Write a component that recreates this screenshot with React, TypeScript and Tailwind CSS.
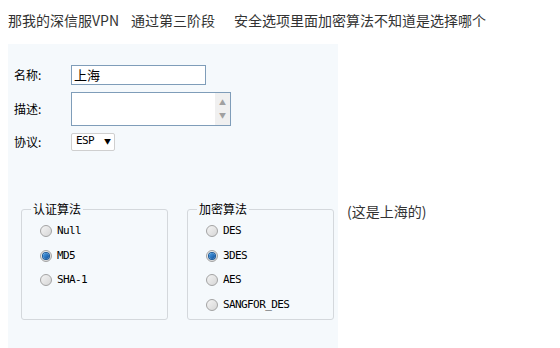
const cjk = "font-['Noto_Sans_CJK_SC','Noto_Sans',sans-serif]";
const mono = "font-['DejaVu_Sans_Mono','Liberation_Mono',monospace]";

function Radio({ label, checked }: { label: string; checked?: boolean }) {
  return (
    <div className="flex h-[24.5px] items-center">
      <span className="flex h-[12px] w-[12px] items-center justify-center rounded-full border border-[#a3a3a3] bg-gradient-to-br from-[#f4f4f4] to-[#d6d6d6]">
        {checked && (
          <span className="h-[6px] w-[6px] rounded-full bg-gradient-to-br from-[#4fa3e8] to-[#0b4f9c] ring-1 ring-[#1c5a99]" />
        )}
      </span>
      <span className={`${mono} ml-[5px] text-[11px] tracking-[-0.6px] text-black`}>{label}</span>
    </div>
  );
}

function Group({ title, items, checked }: { title: string; items: string[]; checked: string }) {
  return (
    <div className="relative h-[111px] w-[147px] rounded-[3px] border border-[#d4d8dc] pl-[18px] pt-[9px]">
      <span className={`${cjk} absolute -top-[9px] left-[9px] bg-[#f5f9fc] px-[2px] text-[12px] leading-4 text-black`}>
        {title}
      </span>
      {items.map((it) => (
        <Radio key={it} label={it} checked={it === checked} />
      ))}
    </div>
  );
}

export default function App() {
  return (
    <div className={`${cjk} h-[348px] w-[560px] overflow-hidden bg-white text-[#333]`}>
      {/* 标题 */}
      <div className="flex h-11 items-start pl-2 pt-[10px] text-[14px] leading-5">
        <span>那我的深信服VPN</span>
        <span className="ml-[12px]">通过第三阶段</span>
        <span className="ml-[19px]">安全选项里面加密算法不知道是选择哪个</span>
      </div>

      <div className="flex">
        <div className="ml-2 h-[304px] w-[330px] bg-[#f5f9fc] pl-[6px] pt-[21px] text-[12px] text-black">
          <div className="flex h-5 items-center">
            <span className="w-[57px]">名称:</span>
            <div className="flex h-5 w-[135px] items-center border border-[#7f9db9] bg-white pl-[2px] text-[13px]">上海</div>
          </div>

          <div className="mt-[7px] flex h-[34px] items-center">
            <span className="w-[57px]">描述:</span>
            <div className="flex h-[34px] w-[160px] border border-[#7f9db9] bg-white">
              <div className="flex-1" />
              <div className="flex w-[15px] flex-col items-center justify-between bg-[#f0f0f0] py-[6px] text-[7px] leading-none text-[#a0a0a0]">
                <span>▲</span>
                <span>▼</span>
              </div>
            </div>
          </div>

          <div className="mt-[7px] flex h-[17px] items-center">
            <span className="w-[57px]">协议:</span>
            <div className="flex h-[18px] w-[44px] items-center rounded-[2px] border border-[#cfcfcf] bg-white pl-[4px]">
              <span className={`${mono} text-[11px] tracking-[-0.6px]`}>ESP</span>
              <span className="ml-[10px] text-[7px] leading-none">▼</span>
            </div>
          </div>

          <div className="ml-[7px] mt-[59px] flex gap-[19px]">
            <Group title="认证算法" items={["Null", "MD5", "SHA-1"]} checked="MD5" />
            <Group title="加密算法" items={["DES", "3DES", "AES", "SANGFOR_DES"]} checked="3DES" />
          </div>
        </div>

        <div className="ml-[9px] mt-[157px] text-[14px] leading-5 text-[#333]">(这是上海的)</div>
      </div>
    </div>
  );
}
